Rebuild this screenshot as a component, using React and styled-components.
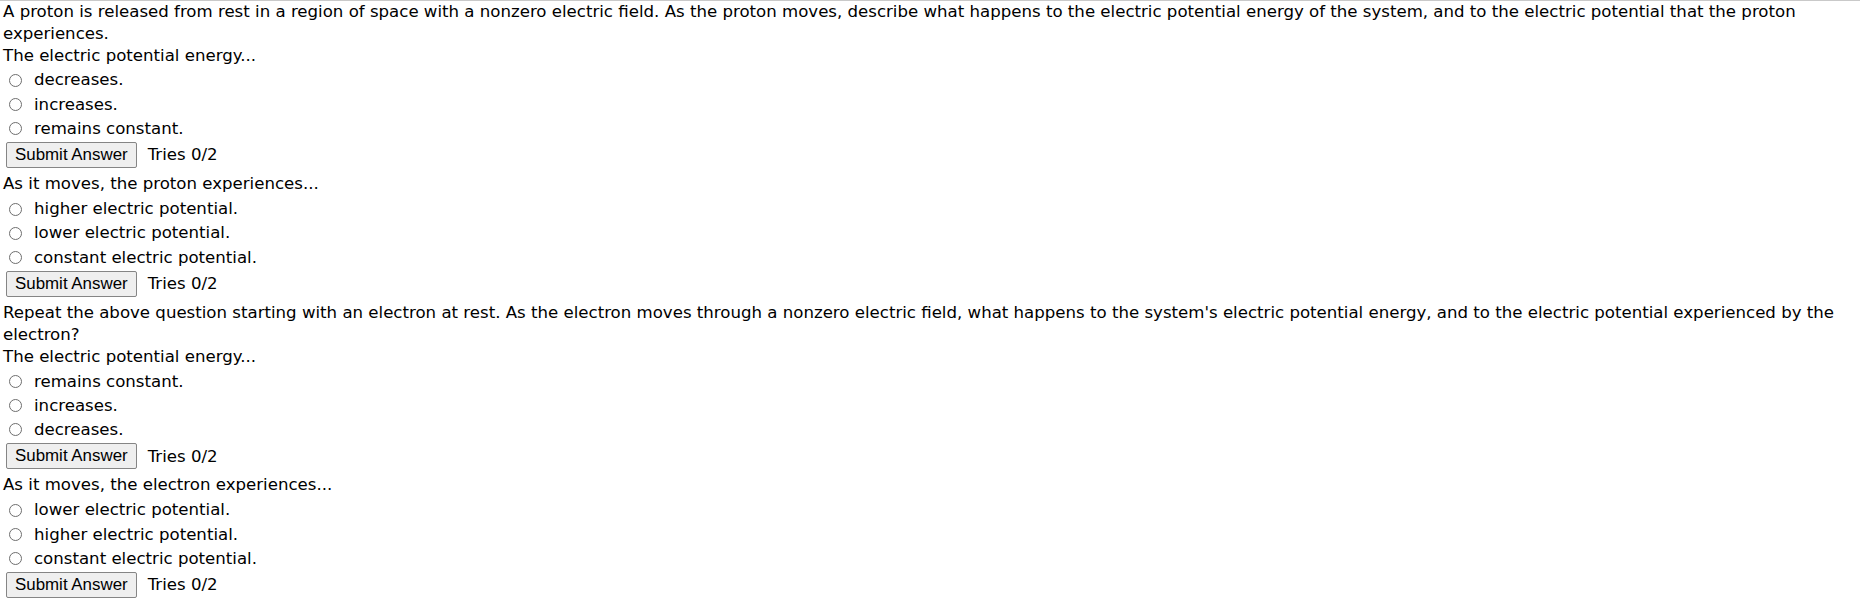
import styled, { createGlobalStyle } from "styled-components"

const GlobalStyle = createGlobalStyle`
    html, body {
        margin: 0;
        padding: 0;
        background: #fff;
    }
    body {
        font-family: "DejaVu Sans", Verdana, sans-serif;
        font-size: 16.6px;
        color: #000;
    }
`

// the problem text, split into its parts
const parts = [
    {
        question: "A proton is released from rest in a region of space with a nonzero electric field. As the proton moves, describe what happens to the electric potential energy of the system, and to the electric potential that the proton experiences.",
        prompt: "The electric potential energy...",
        options: ["decreases.", "increases.", "remains constant."],
    },
    {
        prompt: "As it moves, the proton experiences...",
        options: ["higher electric potential.", "lower electric potential.", "constant electric potential."],
    },
    {
        question: "Repeat the above question starting with an electron at rest. As the electron moves through a nonzero electric field, what happens to the system's electric potential energy, and to the electric potential experienced by the electron?",
        prompt: "The electric potential energy...",
        options: ["remains constant.", "increases.", "decreases."],
    },
    {
        prompt: "As it moves, the electron experiences...",
        options: ["lower electric potential.", "higher electric potential.", "constant electric potential."],
    },
]

const Part = ({ part, index }) => {
    return <PartSection>
        {part.question && <Question>{part.question}</Question>}
        <Prompt>{part.prompt}</Prompt>
        <Options>
            {part.options.map((option, i) => {
                const id = `part${index}-opt${i}`
                return <OptionRow key={id}>
                    <Radio type="radio" id={id} name={`part${index}`} value={option} />
                    <OptionLabel htmlFor={id}>{option}</OptionLabel>
                </OptionRow>
            })}
        </Options>
        <SubmitRow>
            <SubmitButton type="button">Submit Answer</SubmitButton>
            <Tries>Tries 0/2</Tries>
        </SubmitRow>
    </PartSection>
}

const App = () => {
    return <>
        <GlobalStyle />
        <Page>
            {parts.map((part, i) => <Part key={i} part={part} index={i} />)}
        </Page>
    </>
}

const Page = styled.main`
    border-top: 1px solid #c9c9c9;
    padding: 0 4px 0 3px;
    line-height: 21.75px;
`
const PartSection = styled.section`
    display: flex;
    flex-direction: column;
`
const Question = styled.div``
const Prompt = styled.div``
const Options = styled.div`
    display: flex;
    flex-direction: column;
    padding-top: 2px;
`
const OptionRow = styled.div`
    display: flex;
    align-items: center;
    height: 24.2px;
`
const Radio = styled.input`
    appearance: none;
    width: 13px;
    height: 13px;
    margin: 0 12px 0 6px;
    border: 1px solid #6e6e6e;
    border-radius: 50%;
    background: #fff;
    box-sizing: border-box;
    flex-shrink: 0;
`
const OptionLabel = styled.label``
const SubmitRow = styled.div`
    display: flex;
    align-items: center;
    padding: 1.5px 0 5px 3px;
`
const SubmitButton = styled.button`
    height: 26px;
    padding: 0 8px;
    box-sizing: border-box;
    font-family: "Liberation Sans", Arial, sans-serif;
    font-size: 16.9px;
    color: #000;
    background-color: #efefef;
    border: 1px solid #858585;
    border-radius: 2px;
`
const Tries = styled.span`
    margin-left: 11px;
`

export default App
